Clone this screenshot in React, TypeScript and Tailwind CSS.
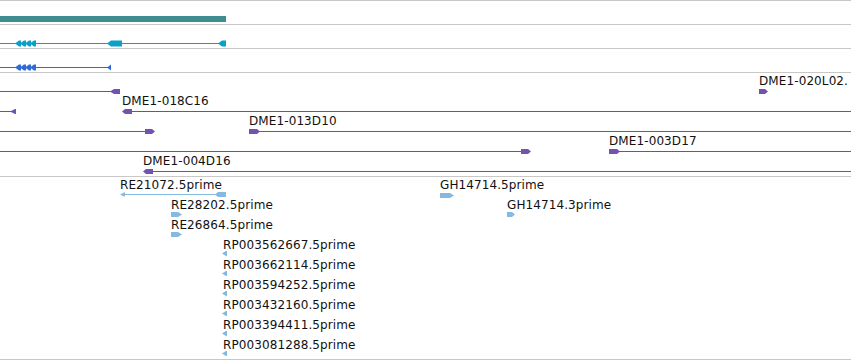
import React from "react";

type Glyph = { x: number; w: number; dir: "L" | "R"; h?: number; tip?: number };
type Row = { y: number; lines: [number, number][]; glyphs: Glyph[] };
type Label = { x: number; top: number; text: string };

const arrowPoints = (g: Glyph, cy: number) => {
  const h = g.h ?? 5;
  const tip = g.tip ?? 3;
  const t = cy - h / 2;
  const b = cy + h / 2;
  const x0 = g.x;
  const x1 = g.x + g.w;
  if (g.dir === "R") {
    return `${x0},${t} ${x1 - tip},${t} ${x1},${cy} ${x1 - tip},${b} ${x0},${b}`;
  }
  return `${x0},${cy} ${x0 + tip},${t} ${x1},${t} ${x1},${b} ${x0 + tip},${b}`;
};

const cluster = (x: number): Glyph[] =>
  [0, 5, 10, 15].map((o) => ({ x: x + o, w: 6, dir: "L" as const, h: 6, tip: 4 }));

const purpleRows: Row[] = [
  { y: 18, lines: [[0, 112]], glyphs: [{ x: 110, w: 10, dir: "L", tip: 4 }, { x: 759, w: 9, dir: "R" }] },
  { y: 38, lines: [[0, 14], [124, 851]], glyphs: [{ x: 10, w: 6, dir: "L", tip: 5 }, { x: 122, w: 10, dir: "L" }] },
  { y: 58, lines: [[0, 150], [255, 851]], glyphs: [{ x: 145, w: 10, dir: "R" }, { x: 249, w: 11, dir: "R" }] },
  { y: 78, lines: [[0, 526], [615, 851]], glyphs: [{ x: 521, w: 10, dir: "R" }, { x: 609, w: 11, dir: "R" }] },
  { y: 98, lines: [[148, 851]], glyphs: [{ x: 143, w: 10, dir: "L" }] },
];

const purpleLabels: Label[] = [
  { x: 759, top: 1, text: "DME1-020L02." },
  { x: 122, top: 21, text: "DME1-018C16" },
  { x: 249, top: 41, text: "DME1-013D10" },
  { x: 609, top: 61, text: "DME1-003D17" },
  { x: 143, top: 81, text: "DME1-004D16" },
];

const estLabels: Label[] = [
  { x: 120, top: 1, text: "RE21072.5prime" },
  { x: 440, top: 1, text: "GH14714.5prime" },
  { x: 171, top: 21, text: "RE28202.5prime" },
  { x: 507, top: 21, text: "GH14714.3prime" },
  { x: 171, top: 41, text: "RE26864.5prime" },
  { x: 223, top: 61, text: "RP003562667.5prime" },
  { x: 223, top: 81, text: "RP003662114.5prime" },
  { x: 223, top: 101, text: "RP003594252.5prime" },
  { x: 223, top: 121, text: "RP003432160.5prime" },
  { x: 223, top: 141, text: "RP003394411.5prime" },
  { x: 223, top: 161, text: "RP003081288.5prime" },
];

const FeatureRows = ({ rows, line, fill }: { rows: Row[]; line: string; fill: string }) => (
  <>
    {rows.map((r, i) => (
      <g key={i}>
        {r.lines.map(([a, b], j) => (
          <rect key={j} x={a} y={r.y} width={b - a} height={1} fill={line} />
        ))}
        {r.glyphs.map((g, j) => (
          <polygon key={j} points={arrowPoints(g, r.y + 0.5)} fill={fill} />
        ))}
      </g>
    ))}
  </>
);

const Labels = ({ items }: { items: Label[] }) => (
  <>
    {items.map((l) => (
      <div
        key={l.text}
        className="absolute whitespace-nowrap text-[12px] leading-[14px] tracking-[0.1px] text-[#111]"
        style={{ left: l.x, top: l.top }}
      >
        {l.text}
      </div>
    ))}
  </>
);

export default function App() {
  const estRows: Row[] = [
    { y: 17, lines: [[123, 218]], glyphs: [{ x: 120, w: 5, dir: "L", h: 4, tip: 4 }, { x: 215, w: 11, dir: "L", h: 5, tip: 3 }] },
    { y: 18, lines: [], glyphs: [{ x: 440, w: 14, dir: "R", h: 5, tip: 4 }] },
    { y: 37, lines: [], glyphs: [{ x: 171, w: 11, dir: "R", h: 5, tip: 4 }, { x: 507, w: 8, dir: "R", h: 5, tip: 3 }] },
    { y: 57, lines: [], glyphs: [{ x: 171, w: 11, dir: "R", h: 5, tip: 4 }] },
    ...[0, 1, 2, 3, 4, 5].map((i) => ({
      y: 76 + i * 20,
      lines: [] as [number, number][],
      glyphs: [{ x: 222, w: 5, dir: "L" as const, h: 5, tip: 4 }],
    })),
  ];

  return (
    <div className="w-[851px] h-[360px] overflow-hidden bg-white font-['DejaVu_Sans',sans-serif]">
      {/* gene span track */}
      <div className="relative h-[24px] border-t border-[#c8c8c8]">
        <svg width={851} height={23} className="block">
          <rect x={0} y={15} width={226} height={6} fill="#3f8e8f" />
        </svg>
      </div>

      {/* transcript track */}
      <div className="relative h-[24px] border-t border-[#c8c8c8]">
        <svg width={851} height={23} className="block">
          <FeatureRows
            line="#1c98b8"
            fill="#0aa0c8"
            rows={[
              {
                y: 18,
                lines: [[0, 226]],
                glyphs: [
                  ...cluster(15),
                  { x: 107, w: 15, dir: "L", h: 6, tip: 4 },
                  { x: 218, w: 8, dir: "L", h: 6, tip: 4 },
                ],
              },
            ]}
          />
        </svg>
      </div>

      {/* CDS track */}
      <div className="relative h-[24px] border-t border-[#c8c8c8]">
        <svg width={851} height={23} className="block">
          <FeatureRows
            line="#3a68c0"
            fill="#2f6bd6"
            rows={[{ y: 18, lines: [[0, 110]], glyphs: [...cluster(15), { x: 107, w: 4, dir: "L", h: 6, tip: 4 }] }]}
          />
        </svg>
      </div>

      {/* BAC clones */}
      <div className="relative h-[104px] border-t border-[#c8c8c8]">
        <svg width={851} height={103} className="block">
          <FeatureRows rows={purpleRows} line="#6f4fa3" fill="#7452ad" />
        </svg>
        <Labels items={purpleLabels} />
      </div>

      {/* ESTs */}
      <div className="relative h-[184px] border-y border-[#c8c8c8]">
        <svg width={851} height={182} className="block">
          <FeatureRows rows={estRows} line="#85b9df" fill="#85b9df" />
        </svg>
        <Labels items={estLabels} />
      </div>
    </div>
  );
}
